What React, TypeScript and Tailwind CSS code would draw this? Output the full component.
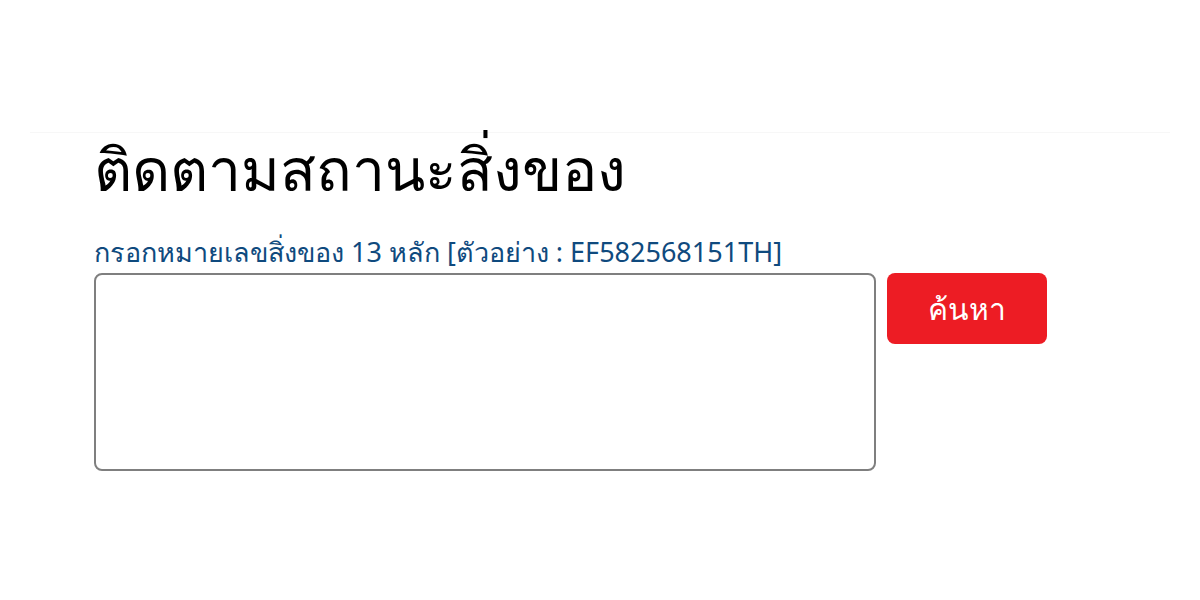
export default function App() {
  return (
    <div className="min-h-screen bg-white">
      <div className="pt-[132px] px-[30px]">
        <div className="border-t border-[#f7f7f7] pl-[64px]">
          <h1 className="text-[59px] leading-[70px] text-black font-['Noto_Sans','DejaVu_Sans',sans-serif]">
            ติดตามสถานะสิ่งของ
          </h1>
          <p className="mt-[32px] text-[27px] leading-[34px] text-[#0f4a7e] font-['Noto_Sans','DejaVu_Sans',sans-serif]">
            กรอกหมายเลขสิ่งของ 13 หลัก [ตัวอย่าง : EF582568151TH]
          </p>
          <div className="mt-[4px] flex items-start gap-[11px]">
            <textarea className="w-[782px] h-[198px] rounded-[8px] border-2 border-[#7f7f7f] resize-none outline-none" />
            <button className="w-[160px] h-[71px] rounded-[8px] bg-[#ed1c24] text-white text-[30px] font-['Noto_Sans','DejaVu_Sans',sans-serif]">
              ค้นหา
            </button>
          </div>
        </div>
      </div>
    </div>
  )
}
